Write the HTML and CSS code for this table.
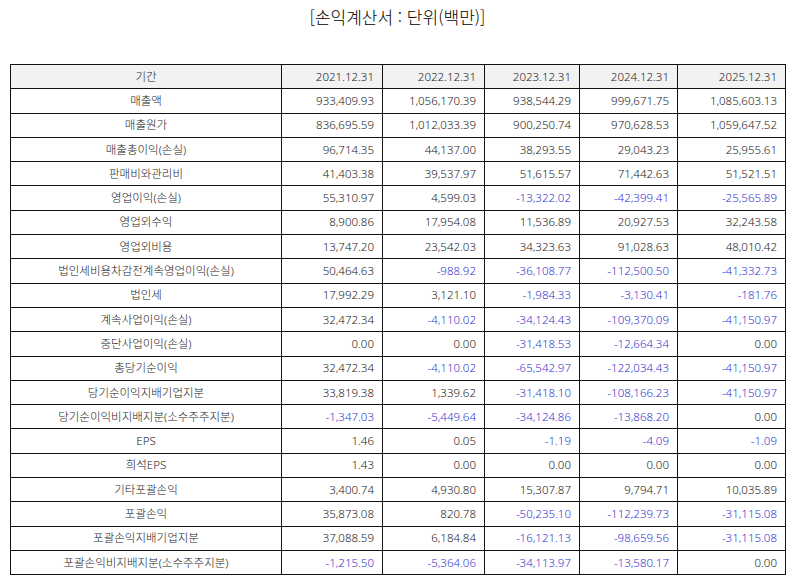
FILE: index.html
```html
<!DOCTYPE html>
<html lang="ko">
<head>
<meta charset="utf-8">
<link rel="stylesheet" href="styles.css">
</head>
<body>
<div class="page">
  <h1 class="title">[손익계산서 : 단위(백만)]</h1>
  <table class="fin">
    <colgroup>
      <col class="c-label"><col class="c-2021"><col class="c-2022"><col class="c-2023"><col class="c-2024"><col class="c-2025">
    </colgroup>
    <thead>
      <tr><th>기간</th><th>2021.12.31</th><th>2022.12.31</th><th>2023.12.31</th><th>2024.12.31</th><th>2025.12.31</th></tr>
    </thead>
    <tbody>
      <tr><td>매출액</td><td>933,409.93</td><td>1,056,170.39</td><td>938,544.29</td><td>999,671.75</td><td>1,085,603.13</td></tr>
      <tr><td>매출원가</td><td>836,695.59</td><td>1,012,033.39</td><td>900,250.74</td><td>970,628.53</td><td>1,059,647.52</td></tr>
      <tr><td>매출총이익(손실)</td><td>96,714.35</td><td>44,137.00</td><td>38,293.55</td><td>29,043.23</td><td>25,955.61</td></tr>
      <tr><td>판매비와관리비</td><td>41,403.38</td><td>39,537.97</td><td>51,615.57</td><td>71,442.63</td><td>51,521.51</td></tr>
      <tr><td>영업이익(손실)</td><td>55,310.97</td><td>4,599.03</td><td class="neg">-13,322.02</td><td class="neg">-42,399.41</td><td class="neg">-25,565.89</td></tr>
      <tr><td>영업외수익</td><td>8,900.86</td><td>17,954.08</td><td>11,536.89</td><td>20,927.53</td><td>32,243.58</td></tr>
      <tr><td>영업외비용</td><td>13,747.20</td><td>23,542.03</td><td>34,323.63</td><td>91,028.63</td><td>48,010.42</td></tr>
      <tr><td>법인세비용차감전계속영업이익(손실)</td><td>50,464.63</td><td class="neg">-988.92</td><td class="neg">-36,108.77</td><td class="neg">-112,500.50</td><td class="neg">-41,332.73</td></tr>
      <tr><td>법인세</td><td>17,992.29</td><td>3,121.10</td><td class="neg">-1,984.33</td><td class="neg">-3,130.41</td><td class="neg">-181.76</td></tr>
      <tr><td>계속사업이익(손실)</td><td>32,472.34</td><td class="neg">-4,110.02</td><td class="neg">-34,124.43</td><td class="neg">-109,370.09</td><td class="neg">-41,150.97</td></tr>
      <tr><td>중단사업이익(손실)</td><td>0.00</td><td>0.00</td><td class="neg">-31,418.53</td><td class="neg">-12,664.34</td><td>0.00</td></tr>
      <tr><td>총당기순이익</td><td>32,472.34</td><td class="neg">-4,110.02</td><td class="neg">-65,542.97</td><td class="neg">-122,034.43</td><td class="neg">-41,150.97</td></tr>
      <tr><td>당기순이익지배기업지분</td><td>33,819.38</td><td>1,339.62</td><td class="neg">-31,418.10</td><td class="neg">-108,166.23</td><td class="neg">-41,150.97</td></tr>
      <tr><td>당기순이익비지배지분(소수주주지분)</td><td class="neg">-1,347.03</td><td class="neg">-5,449.64</td><td class="neg">-34,124.86</td><td class="neg">-13,868.20</td><td>0.00</td></tr>
      <tr><td>EPS</td><td>1.46</td><td>0.05</td><td class="neg">-1.19</td><td class="neg">-4.09</td><td class="neg">-1.09</td></tr>
      <tr><td>희석EPS</td><td>1.43</td><td>0.00</td><td>0.00</td><td>0.00</td><td>0.00</td></tr>
      <tr><td>기타포괄손익</td><td>3,400.74</td><td>4,930.80</td><td>15,307.87</td><td>9,794.71</td><td>10,035.89</td></tr>
      <tr><td>포괄손익</td><td>35,873.08</td><td>820.78</td><td class="neg">-50,235.10</td><td class="neg">-112,239.73</td><td class="neg">-31,115.08</td></tr>
      <tr><td>포괄손익지배기업지분</td><td>37,088.59</td><td>6,184.84</td><td class="neg">-16,121.13</td><td class="neg">-98,659.56</td><td class="neg">-31,115.08</td></tr>
      <tr><td>포괄손익비지배지분(소수주주지분)</td><td class="neg">-1,215.50</td><td class="neg">-5,364.06</td><td class="neg">-34,113.97</td><td class="neg">-13,580.17</td><td>0.00</td></tr>
    </tbody>
  </table>
</div>
</body>
</html>
```

FILE: styles.css
```css
html, body {
  margin: 0;
  padding: 0;
  background: #ffffff;
}
body {
  font-family: "Noto Sans", "Noto Sans CJK KR", sans-serif;
  color: #222222;
}
.page {
  padding: 0 9px 0 10px;
}
.title {
  margin: 0;
  padding-top: 5px;
  height: 64px;
  box-sizing: border-box;
  text-align: center;
  font-family: "Noto Sans CJK KR", sans-serif;
  font-size: 17px;
  font-weight: 300;
  line-height: 24px;
  color: #000000;
}
.fin {
  width: 775px;
  table-layout: fixed;
  border-collapse: collapse;
  font-size: 11.5px;
  line-height: 14px;
}
.c-label { width: 271px; }
.c-2021 { width: 101px; }
.c-2022 { width: 102px; }
.c-2023 { width: 95px; }
.c-2024 { width: 98px; }
.c-2025 { width: 108px; }
.fin tr {
  height: 24.3px;
}
.fin th, .fin td {
  border: 1px solid #111111;
  padding: 0 8px 0 4px;
  text-align: right;
  font-weight: 300;
  white-space: nowrap;
  color: #1a1a1a;
}
.fin th {
  background: #f2f2f2;
}
.fin th:first-child, .fin td:first-child {
  text-align: center;
  padding: 0 4px;
}
.fin td.neg {
  color: #3535cf;
}
```
